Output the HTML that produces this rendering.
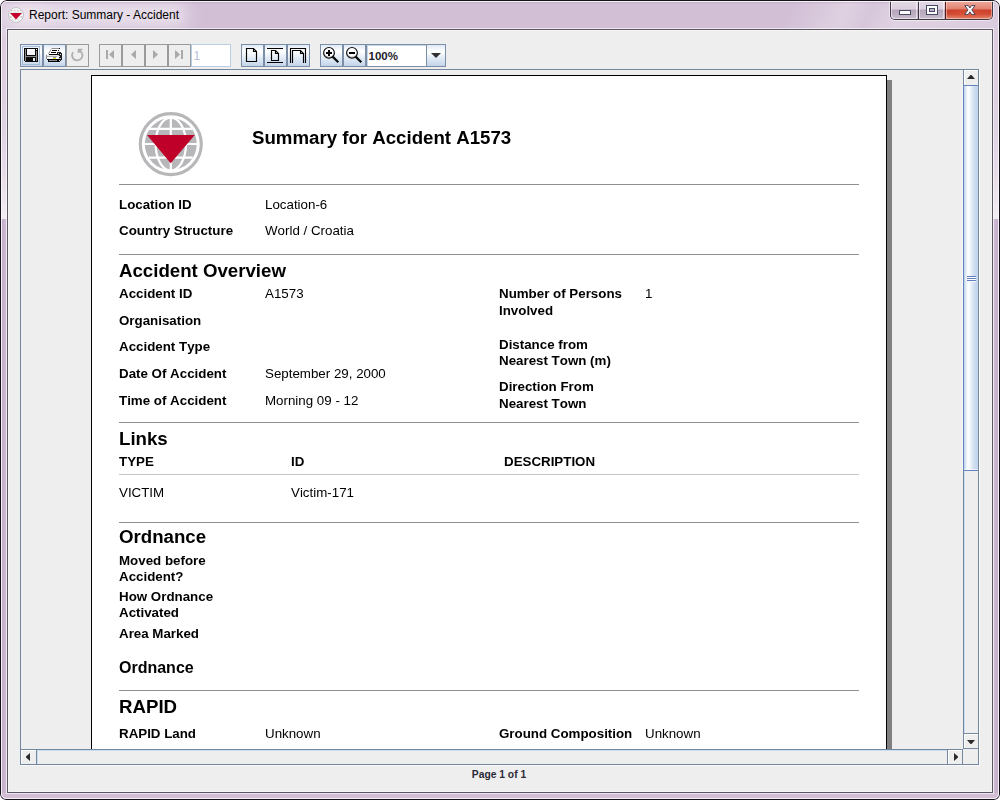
<!DOCTYPE html>
<html>
<head>
<meta charset="utf-8">
<title>Report: Summary - Accident</title>
<style>
*{box-sizing:border-box;margin:0;padding:0}
html,body{width:1000px;height:800px;overflow:hidden;background:#fff}
body{font-family:"Liberation Sans",sans-serif;position:relative}
#win{position:absolute;left:0;top:0;width:1000px;height:800px;border-radius:7px 7px 6px 6px;background:#d2bfd6;overflow:hidden}
#win .glow{position:absolute;left:4px;top:4px;width:184px;height:22px;border-radius:11px;background:rgba(255,255,255,.6);filter:blur(9px)}
#win .glow2{position:absolute;left:-10px;top:-6px;width:60px;height:40px;border-radius:20px;background:rgba(255,255,255,.18);filter:blur(8px)}
#win .streak{position:absolute;left:700px;top:0;width:300px;height:29px;background:linear-gradient(115deg,rgba(255,255,255,0) 0,rgba(255,255,255,0) 30%,rgba(255,255,255,.28) 48%,rgba(255,255,255,.12) 56%,rgba(255,255,255,.3) 66%,rgba(255,255,255,.18) 100%)}
#win .sideL,#win .sideR{position:absolute;top:29px;width:6px;height:190px;background:linear-gradient(rgba(255,255,255,.2) 0,rgba(255,255,255,.3) 50%,rgba(255,255,255,.45) 75%,rgba(255,255,255,.72) 100%)}
#win .sideL{left:1px}#win .sideR{left:993px}
#win .lowL,#win .lowR{position:absolute;top:219px;width:6px;height:574px}
#win .lowL{left:1px;background:linear-gradient(90deg,rgba(110,70,125,.12) 0,rgba(110,70,125,.1) 50%,rgba(255,255,255,.12) 100%)}#win .lowR{left:993px;background:linear-gradient(270deg,rgba(110,70,125,.12) 0,rgba(110,70,125,.1) 50%,rgba(255,255,255,.12) 100%)}
#win .outer-b{z-index:5;pointer-events:none;position:absolute;left:0;top:0;right:0;bottom:0;border:1px solid #15121a;border-radius:7px 7px 6px 6px}
#win .inner-hl{z-index:5;pointer-events:none;position:absolute;left:1px;top:1px;right:1px;bottom:1px;border:1px solid rgba(255,255,255,.78);border-radius:6px 6px 5px 5px}
#win .topshade{position:absolute;left:2px;right:2px;top:2px;height:2px;background:linear-gradient(rgba(150,120,160,.25),rgba(150,120,160,0))}
#ticon{position:absolute;left:7px;top:6px;width:18px;height:18px}
#ttext{position:absolute;left:29px;top:8px;font-size:12px;line-height:14px;color:#000;white-space:nowrap}
#caps{position:absolute;left:890px;top:0;width:103px;height:20px;border:1px solid #3f3946;border-top:none;border-radius:0 0 5px 5px;overflow:hidden;box-shadow:0 0 0 1px rgba(255,255,255,.5)}
#caps .cb{position:absolute;top:0;height:19px}
#caps .cb:after{content:"";position:absolute;left:0;top:1px;right:0;bottom:0;border:1px solid rgba(255,255,255,.55);border-top:none}
#bmin{left:0;width:28px;background:linear-gradient(#ece4ee 0,#e3d9e6 1px,#dcd0df 9px,#b6a6bb 10px,#bdaec2 14px,#cbbdd0 19px);border-right:1px solid #3f3946}
#bmin:after{border-radius:0 0 0 4px;right:1px !important}
#bmax{left:28px;width:27px;background:linear-gradient(#ece4ee 0,#e3d9e6 1px,#dcd0df 9px,#b6a6bb 10px,#bdaec2 14px,#cbbdd0 19px);border-right:1px solid #5a1a14}
#bmax:after{right:1px !important}
#bcls{left:55px;width:46px;background:radial-gradient(ellipse 60% 45% at 50% 75%,rgba(235,90,60,.55),rgba(235,90,60,0)),linear-gradient(#f6bdb1 0,#f0a89b 1px,#e08474 9px,#c63d29 10px,#cb4631 14px,#e2957c 19px)}
#bcls:after{border-radius:0 0 4px 0;border-color:rgba(255,220,210,.5) !important}
#caps svg{position:absolute;left:0;top:0}
#client{position:absolute;left:7px;top:29px;width:986px;height:764px;border:1px solid #5d5763;background:#eeeeee;box-shadow:inset 0 0 0 1px rgba(255,255,255,.4)}
#client:before{content:"";position:absolute;left:-2px;top:-2px;right:-2px;bottom:-2px;border:1px solid rgba(255,255,255,.62);pointer-events:none}
/* toolbar */
.tb{position:absolute;top:14px;width:23px;height:23px;border:1px solid #7b8ea6;background:linear-gradient(#dfe9f5 0,#ffffff 30%,#e3ecf6 60%,#c3d5ea 100%)}
.tb.dis{border-color:#9a9a9a;background:#eeeeee}
.tb svg{position:absolute;left:0;top:0;width:21px;height:21px}
#pgfield{position:absolute;left:183px;top:14px;width:40px;height:23px;border:1px solid #b8cfe5;background:#fff;font-size:12px;color:#b9bfe0;padding:4px 0 0 1.5px;line-height:14px}
#combo{position:absolute;left:358px;top:14px;width:80px;height:23px;border:1px solid #7b8ea6;background:#fff;box-shadow:inset 1px 1px 0 #c5d6ea}
#combo .txt{position:absolute;left:1.5px;top:3.5px;font-size:11.5px;font-weight:bold;color:#1c1c2c;line-height:14px}
#combo .arr{position:absolute;left:59px;top:0;width:19px;height:21px;border-left:1px solid #7b8ea6;background:linear-gradient(#dfe9f5 0,#ffffff 30%,#e3ecf6 60%,#c3d5ea 100%)}
#combo .arr:after{content:"";position:absolute;left:4px;top:8px;border-left:5px solid transparent;border-right:5px solid transparent;border-top:5px solid #303030}
/* scrollpane */
#sp{position:absolute;left:12px;top:39px;width:959px;height:696px;border:1px solid #73879e;background:#eeeeee;box-shadow:1px 1px 0 #fbfbfb}
#view{position:absolute;left:0;top:0;width:942px;height:679px;overflow:hidden}
#page{position:absolute;left:70px;top:5px;width:796px;height:1125px;background:#fff;border:1px solid #000;will-change:transform}
#shadow{position:absolute;left:866px;top:10px;width:5px;height:1125px;background:#808080}
#vsb{position:absolute;left:942px;top:0;width:15px;height:679px;background:#eeeeee;border-left:1px solid #73879e;box-shadow:inset 1px 0 0 #c9dcf0}
#vsb .up{position:absolute;left:0;top:0;width:14px;height:15px;background:#eeeeee;border-left:1px solid #fff;border-top:1px solid #fff}
#vsb .dn{position:absolute;left:0;top:663px;width:14px;height:16px;background:#eeeeee;border-top:1px solid #73879e;border-bottom:1px solid #73879e;box-shadow:inset 1px 1px 0 #fff}
#vsb .thumb{position:absolute;left:-1px;top:15px;width:15px;height:386px;border:1px solid #6382bf;border-right:none;background:linear-gradient(90deg,#bed2ea 0,#e3ecf7 2px,#ffffff 4px,#f3f7fb 6px,#d6e3f2 9px,#c6d8ed 12px,#c1d5ec 14px);box-shadow:-1px 0 0 rgba(255,255,255,.6)}
#vsb .thumb:after{content:"";position:absolute;left:0;right:0;bottom:0;height:1px;background:rgba(255,255,255,.5)}
#vsb .grip{position:absolute;left:3px;top:190px;width:9px;height:6px;background:linear-gradient(#5f7fbd 0,#5f7fbd 1px,#fff 1px,#fff 2px,#5f7fbd 2px,#5f7fbd 3px,#fff 3px,#fff 4px,#5f7fbd 4px,#5f7fbd 5px,#fff 5px,#fff 6px)}
#hsb{position:absolute;left:0;top:679px;width:942px;height:15px;background:#eeeeee;border-top:1px solid #73879e;box-shadow:inset 0 1px 0 #c9dcf0}
#hsb .lt{position:absolute;left:0;top:0;width:16px;height:14px;background:#eeeeee;border-right:1px solid #73879e;box-shadow:inset 1px 1px 0 #fff}
#hsb .rt{position:absolute;left:926px;top:0;width:16px;height:14px;background:#eeeeee;border-left:1px solid #73879e;border-right:1px solid #73879e;box-shadow:inset 1px 1px 0 #fff}
#hsb .trk{position:absolute;left:16px;top:0;width:1px;height:14px;background:#c9dcf0}
#corner{position:absolute;left:942px;top:679px;width:15px;height:15px;background:#eeeeee}
#status{position:absolute;left:-1px;top:738px;width:984px;text-align:center;font-size:10.3px;font-weight:bold;color:#2a2a38;line-height:14px}
/* report */
.t{position:absolute;white-space:nowrap;color:#000;line-height:1;font-kerning:none}
.b{font-weight:bold}
.l{font-size:13.33px}
.h{font-size:18.67px;font-weight:bold}
.hr{position:absolute;left:27px;width:740px;height:1px;background:#909090}
</style>
</head>
<body>
<div id="win">
<div class="glow"></div><div class="glow2"></div><div class="streak"></div><div class="topshade"></div><div class="sideL"></div><div class="sideR"></div><div class="lowL"></div><div class="lowR"></div><div class="outer-b"></div><div class="inner-hl"></div>
<svg id="ticon" viewBox="7 6 18 18"><circle cx="16" cy="15" r="7.5" fill="#f7f6f7" stroke="#c4c0c6" stroke-width="1"/><path d="M11 10.5H21M11.5 19.8H20.5" stroke="#c9c6cb" stroke-width="1" stroke-dasharray="1.5 1.5" fill="none"/><path d="M9.8 12.3H22.2" stroke="#dfe6e6" stroke-width="1" fill="none"/><circle cx="10.6" cy="17" r="1" fill="#c4c2c6"/><circle cx="21.4" cy="17" r="1" fill="#c4c2c6"/><path d="M10 13H22L16 19.6Z" fill="#c3002c"/></svg>
<div id="ttext">Report: Summary - Accident</div>
<div id="caps"><div id="bmin" class="cb"></div><div id="bmax" class="cb"></div><div id="bcls" class="cb"></div>
<svg width="101" height="19" viewBox="891 0 101 19"><g shape-rendering="crispEdges"><rect x="899.5" y="10.5" width="11" height="4" fill="#fbfbfb" stroke="#454a62" stroke-width="1"/><rect x="926.5" y="5.5" width="11" height="9" fill="#fbfbfb" stroke="#454a62" stroke-width="1"/><rect x="929.5" y="8.5" width="5" height="3" fill="#c3b3c8" stroke="#454a62" stroke-width="1"/></g><path d="M964.8 5.6H968.4L969.9 8L971.4 5.6H975L971.8 9.9L975.2 14.4H971.5L969.9 11.8L968.3 14.4H964.6L968 9.9Z" fill="#fbfbfb" stroke="#4a4458" stroke-width="1" stroke-linejoin="round"/></svg></div>
<div id="client">
<!--TOOLBAR-->
<div class="tb " style="left:12px"><svg viewBox="0 0 21 21"><rect x="1.5" y="1.5" width="17" height="18" fill="none" stroke="#a6bbd6" stroke-width="1"/><g shape-rendering="crispEdges"><rect x="3" y="3" width="14" height="14" fill="#0a0a0a"/><rect x="3" y="16" width="1" height="1" fill="#e6eef8"/><rect x="4" y="4" width="1" height="12" fill="#8c8c8c"/><rect x="15" y="6" width="1" height="10" fill="#8c8c8c"/><rect x="4" y="11" width="12" height="1" fill="#8c8c8c"/><rect x="6" y="4" width="8" height="6" fill="#f4f6fb"/><rect x="6" y="4" width="8" height="2" fill="#ffffff"/><rect x="15" y="4" width="1" height="1" fill="#fff"/><rect x="12" y="13" width="2" height="3" fill="#e1e9f5"/></g></svg></div>
<div class="tb " style="left:35px"><svg viewBox="0 0 21 21"><g shape-rendering="crispEdges"><path d="M7 3H16V4L13 9H4Z" fill="#fff"/><path d="M7.5 3.5H15M7 4.5L4.5 9" stroke="#8e8e8e" stroke-width="1" fill="none" shape-rendering="auto"/><rect x="15" y="3" width="1" height="1" fill="#000"/><rect x="8" y="5" width="5" height="1" fill="#000"/><rect x="7" y="7" width="5" height="1" fill="#000"/><rect x="14" y="5" width="1" height="1" fill="#000"/><path d="M13 7H16L18 9V14L15 17V10H13Z" fill="#1c1c1c"/><rect x="5" y="9" width="9" height="1" fill="#000"/><rect x="3" y="10" width="10" height="1" fill="#e9e9e9"/><rect x="3" y="11" width="10" height="1" fill="#b2b2b2"/><rect x="3" y="12" width="11" height="2" fill="#f8faff"/><rect x="9" y="12" width="3" height="1" fill="#8f97b4"/><rect x="9" y="13" width="3" height="1" fill="#f4f000"/><rect x="2" y="10" width="1" height="4" fill="#8e8e8e"/><rect x="3" y="14" width="12" height="1" fill="#000"/><rect x="4" y="15" width="10" height="1" fill="#8c8c8c"/><rect x="4" y="15" width="1" height="1" fill="#000"/><rect x="13" y="15" width="2" height="1" fill="#000"/><rect x="4" y="16" width="11" height="1" fill="#000"/><rect x="14" y="8" width="1" height="1" fill="#ddd"/><rect x="16" y="9" width="1" height="1" fill="#ddd"/><rect x="15" y="11" width="1" height="1" fill="#ccc"/><rect x="16" y="13" width="1" height="1" fill="#bbb"/><rect x="15" y="15" width="1" height="1" fill="#ccc"/><rect x="14" y="10" width="1" height="1" fill="#bbb"/><rect x="15" y="13" width="1" height="1" fill="#999"/></g></svg></div>
<div class="tb dis" style="left:58px"><svg viewBox="0 0 21 21"><g fill="none" stroke="#b0b0b0" stroke-width="1.8"><path d="M6 7.2A5.2 5.2 0 1 0 15.1 8.2"/><path d="M11 4.6H15.4M11.6 4V8M12 5L15.2 8.4"/></g></svg></div>
<div class="tb dis" style="left:91px"><svg viewBox="0 0 21 21"><rect x="6" y="5" width="2" height="9" fill="#a9a9a9"/><path d="M14 5V14L9 9.5Z" fill="#a9a9a9"/></svg></div>
<div class="tb dis" style="left:114px"><svg viewBox="0 0 21 21"><path d="M13 5V14L8 9.5Z" fill="#a9a9a9"/></svg></div>
<div class="tb dis" style="left:137px"><svg viewBox="0 0 21 21"><path d="M7 5V14L12 9.5Z" fill="#a9a9a9"/></svg></div>
<div class="tb dis" style="left:160px"><svg viewBox="0 0 21 21"><path d="M6 5V14L11 9.5Z" fill="#a9a9a9"/><rect x="12" y="5" width="2" height="9" fill="#a9a9a9"/></svg></div>
<div id="pgfield">1</div>
<div class="tb " style="left:233px"><svg viewBox="0 0 21 21"><path d="M4.5 3.5H11.5L14.5 6.5V16.5H4.5Z" fill="none" stroke="#000" stroke-width="1.15"/><path d="M11.5 3.5V6.5H14.5" fill="none" stroke="#000" stroke-width="1.15"/></svg></div>
<div class="tb " style="left:256px"><svg viewBox="0 0 21 21"><path d="M2 3.5H18M2 17.5H18" stroke="#000" stroke-width="1.15"/><path d="M6.5 5.5H10.5L13.5 8.5V15.5H6.5Z" fill="none" stroke="#000" stroke-width="1.15"/><path d="M10.5 5.5V8.5H13.5" fill="none" stroke="#000" stroke-width="1.15"/></svg></div>
<div class="tb " style="left:279px"><svg viewBox="0 0 21 21"><g fill="none" stroke="#000" stroke-width="1.15"><path d="M2.5 18V3.5H17.5V18"/><path d="M4.5 18V5.5H12.5L15.5 8.5V18"/><path d="M12.5 5.5V8.5H15.5"/></g></svg></div>
<div class="tb " style="left:312px"><svg viewBox="0 0 21 21"><circle cx="8" cy="7.9" r="5.4" fill="#a8a8a8"/><circle cx="8" cy="6.9" r="4.9" fill="#fff"/><circle cx="8" cy="7.9" r="5.4" fill="none" stroke="#0a0a0a" stroke-width="1.1"/><path d="M11.6 11.6L17.3 17.3" stroke="#0a0a0a" stroke-width="2.2"/><path d="M5 8H11M8 5V11" stroke="#000" stroke-width="2"/></svg></div>
<div class="tb " style="left:335px"><svg viewBox="0 0 21 21"><circle cx="8" cy="7.9" r="5.4" fill="#a8a8a8"/><circle cx="8" cy="6.9" r="4.9" fill="#fff"/><circle cx="8" cy="7.9" r="5.4" fill="none" stroke="#0a0a0a" stroke-width="1.1"/><path d="M11.6 11.6L17.3 17.3" stroke="#0a0a0a" stroke-width="2.2"/><path d="M5 8H11" stroke="#000" stroke-width="2"/></svg></div>
<div id="combo"><div class="txt">100%</div><div class="arr"></div></div>
<!--/TOOLBAR-->
<div id="sp">
<div id="view">
<div id="page">
<!--REPORT-->
<svg style="position:absolute;left:44px;top:33px" width="70" height="70" viewBox="136 109 70 70"><circle cx="170.8" cy="144.1" r="30.5" fill="none" stroke="#b7b7ba" stroke-width="3.1"/><circle cx="170.8" cy="144.1" r="26" fill="#b7b7ba"/><g stroke="#fff" stroke-width="2.2" fill="none"><path d="M170.8 117V171M149 128.9H192.6M144 144H197.6M149 157.6H192.6"/><ellipse cx="170.8" cy="144.1" rx="15.2" ry="26.5"/></g><path d="M147 135H194.8L170.7 163.2Z" fill="#bf0029"/></svg>
<div class="t h" style="left:160px;top:53.20px">Summary for Accident A1573</div>
<div class="hr" style="top:108px"></div>
<div class="t l b" style="left:27px;top:121.72px">Location ID</div>
<div class="t l" style="left:173px;top:121.72px">Location-6</div>
<div class="t l b" style="left:27px;top:147.72px">Country Structure</div>
<div class="t l" style="left:173px;top:147.72px">World / Croatia</div>
<div class="hr" style="top:178px"></div>
<div class="t h" style="left:27px;top:186.20px">Accident Overview</div>
<div class="t l b" style="left:27px;top:210.72px">Accident ID</div>
<div class="t l" style="left:173px;top:210.72px">A1573</div>
<div class="t l b" style="left:27px;top:237.72px">Organisation</div>
<div class="t l b" style="left:27px;top:263.72px">Accident Type</div>
<div class="t l b" style="left:27px;top:290.72px">Date Of Accident</div>
<div class="t l" style="left:173px;top:290.72px">September 29, 2000</div>
<div class="t l b" style="left:27px;top:317.72px">Time of Accident</div>
<div class="t l" style="left:173px;top:317.72px">Morning 09 - 12</div>
<div class="t l b" style="left:407px;top:210.72px">Number of Persons</div>
<div class="t l" style="left:553px;top:210.72px">1</div>
<div class="t l b" style="left:407px;top:227.72px">Involved</div>
<div class="t l b" style="left:407px;top:261.72px">Distance from</div>
<div class="t l b" style="left:407px;top:277.72px">Nearest Town (m)</div>
<div class="t l b" style="left:407px;top:303.72px">Direction From</div>
<div class="t l b" style="left:407px;top:320.72px">Nearest Town</div>
<div class="hr" style="top:346px"></div>
<div class="t h" style="left:27px;top:354.20px">Links</div>
<div class="t l b" style="left:27px;top:378.72px">TYPE</div>
<div class="t l b" style="left:199px;top:378.72px">ID</div>
<div class="t l b" style="left:412px;top:378.72px">DESCRIPTION</div>
<div class="hr" style="top:398px;background:#c4c4c4"></div>
<div class="t l" style="left:27px;top:409.72px">VICTIM</div>
<div class="t l" style="left:199px;top:409.72px">Victim-171</div>
<div class="hr" style="top:446px"></div>
<div class="t h" style="left:27px;top:452.20px">Ordnance</div>
<div class="t l b" style="left:27px;top:477.72px">Moved before</div>
<div class="t l b" style="left:27px;top:493.72px">Accident?</div>
<div class="t l b" style="left:27px;top:513.72px">How Ordnance</div>
<div class="t l b" style="left:27px;top:529.72px">Activated</div>
<div class="t l b" style="left:27px;top:550.72px">Area Marked</div>
<div class="t b" style="left:27px;top:584.46px;font-size:16px">Ordnance</div>
<div class="hr" style="top:614px"></div>
<div class="t h" style="left:27px;top:621.70px">RAPID</div>
<div class="t l b" style="left:27px;top:650.72px">RAPID Land</div>
<div class="t l" style="left:173px;top:650.72px">Unknown</div>
<div class="t l b" style="left:407px;top:650.72px">Ground Composition</div>
<div class="t l" style="left:553px;top:650.72px">Unknown</div>
<!--/REPORT-->
</div>
<div id="shadow"></div>
</div>
<div id="vsb"><div class="up"><svg style="position:absolute;left:2px;top:4px" width="8" height="4" viewBox="0 0 8 4"><path d="M0 4H8L4.5 0H3.5Z" fill="#2b2b2b"/></svg></div><div class="thumb"><div class="grip"></div></div><div class="dn"><svg style="position:absolute;left:3px;top:6px" width="8" height="4" viewBox="0 0 8 4"><path d="M0 0H8L4.5 4H3.5Z" fill="#2b2b2b"/></svg></div></div>
<div id="hsb"><div class="lt"><svg style="position:absolute;left:5px;top:3px" width="4" height="8" viewBox="0 0 4 8"><path d="M4 0V8L0 4.5V3.5Z" fill="#2b2b2b"/></svg></div><div class="trk"></div><div class="rt"><svg style="position:absolute;left:6px;top:3px" width="4" height="8" viewBox="0 0 4 8"><path d="M0 0V8L4 4.5V3.5Z" fill="#2b2b2b"/></svg></div></div><div id="corner"></div>
</div>
<div id="status">Page 1 of 1</div>
</div>
</div>
</body>
</html>
